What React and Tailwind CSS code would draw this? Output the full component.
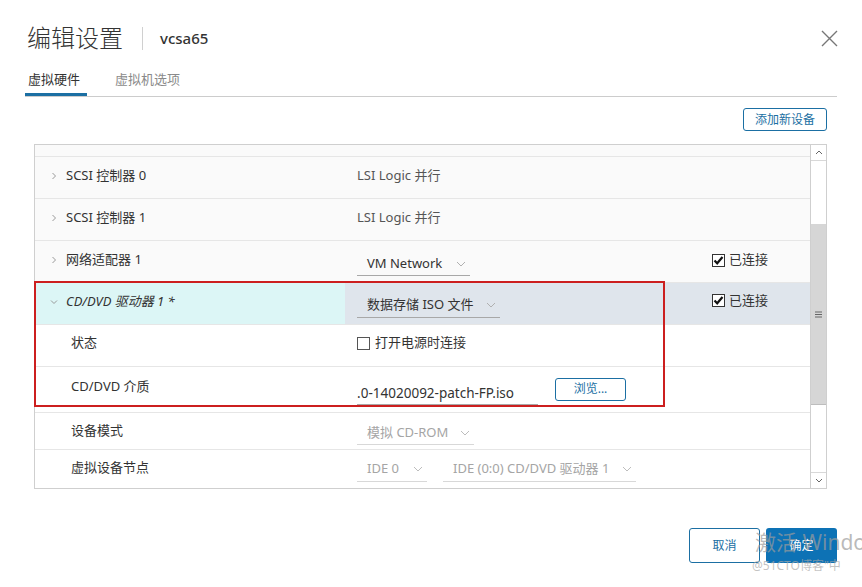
import React from 'react';

const FONT = { fontFamily: '"Noto Sans", "Noto Sans CJK SC", sans-serif' };

const Chevron = ({ open }) => (
  <svg width="8" height="8" viewBox="0 0 8 8" className="shrink-0">
    {open ? (
      <path d="M1 2.5 L4 5.5 L7 2.5" fill="none" stroke="#9a9a9a" strokeWidth="1" />
    ) : (
      <path d="M2.5 1 L5.5 4 L2.5 7" fill="none" stroke="#9a9a9a" strokeWidth="1" />
    )}
  </svg>
);

const Caret = ({ color = '#b0b0b0' }) => (
  <svg width="10" height="6" viewBox="0 0 10 6" className="shrink-0">
    <path d="M1 1 L5 5 L9 1" fill="none" stroke={color} strokeWidth="1" />
  </svg>
);

const CheckBox = ({ checked }) => (
  <svg width="13" height="13" viewBox="0 0 13 13" className="shrink-0">
    <rect x="0.5" y="0.5" width="12" height="12" fill="#fff" stroke={checked ? '#333' : '#555'} strokeWidth="1" />
    {checked && <path d="M2.5 6.5 L5.2 9.3 L10.5 3" fill="none" stroke="#111" strokeWidth="2.2" />}
  </svg>
);

const Select = ({ label, width, muted, className = '' }) => (
  <div
    className={`flex items-center justify-between border-b h-[24px] pl-[10px] pr-[4px] ${muted ? 'border-[#d8d8d8]' : 'border-[#a8a8a8]'} ${className}`}
    style={{ width }}
  >
    <span className={`text-[13px] ${muted ? 'text-[#a5a5a5]' : 'text-[#333]'}`}>{label}</span>
    <Caret color={muted ? '#bdbdbd' : '#b0b0b0'} />
  </div>
);

const DeviceRow = ({ label, children, right }) => (
  <div className="flex items-center h-[42px] pb-[3px] bg-[#fafafa] border-b border-[#e6e6e6]">
    <div className="w-[322px] flex items-center pl-[15px] gap-[8px]">
      <Chevron />
      <span className="text-[13px] text-[#333]">{label}</span>
    </div>
    <div className="w-[355px] flex items-center">{children}</div>
    <div className="flex items-center gap-[4px]">{right}</div>
  </div>
);

const SubRow = ({ label, height, children, last, pad = 0 }) => (
  <div
    className={`flex items-center bg-white ${last ? '' : 'border-b border-[#e6e6e6]'}`}
    style={{ height, paddingBottom: pad }}
  >
    <div className="w-[322px] pl-[36px] text-[13px] text-[#333]">{label}</div>
    <div className="flex items-center flex-1">{children}</div>
  </div>
);

const Connected = () => (
  <>
    <CheckBox checked />
    <span className="text-[13px] text-[#333]">已连接</span>
  </>
);

export default function App() {
  return (
    <div className="w-[862px] h-[587px] bg-white relative overflow-hidden" style={FONT}>
      {/* Header */}
      <div className="flex items-center justify-between pl-[27px] pr-[24px] pt-[20px] h-[56px]">
        <div className="flex items-center">
          <span className="text-[24px] font-light text-[#333] leading-none">编辑设置</span>
          <div className="w-px h-[23px] bg-[#d0d0d0] ml-[19px] mr-[17px]" />
          <span className="text-[15px] font-medium text-[#333]">vcsa65</span>
        </div>
        <svg width="17" height="17" viewBox="0 0 17 17">
          <path d="M1 1 L16 16 M16 1 L1 16" stroke="#777" strokeWidth="1.4" />
        </svg>
      </div>

      {/* Tabs */}
      <div className="mx-[25px] mt-[10px] flex border-b border-[#cccccc] h-[31px]">
        <div className="px-[3px] w-[62px] border-b-[3px] border-[#1b6fa3] text-[13px] text-[#333] pt-[4px]">
          虚拟硬件
        </div>
        <div className="ml-[28px] text-[13px] text-[#8a8a8a] pt-[4px]">虚拟机选项</div>
      </div>

      {/* Add device */}
      <div className="flex justify-end pr-[35px] mt-[11px]">
        <button className="w-[84px] h-[23px] border border-[#1b6fa3] rounded-[3px] text-[12px] text-[#1b6fa3] bg-white">
          添加新设备
        </button>
      </div>

      {/* Device table */}
      <div className="ml-[34px] mt-[13px] w-[793px] h-[345px] border border-[#cfcfcf] flex">
        <div className="flex-1 flex flex-col">
          <div className="h-[12px] bg-[#fafafa] border-b border-[#e6e6e6]" />
          <DeviceRow label="SCSI 控制器 0">
            <span className="text-[13px] text-[#555]">LSI Logic 并行</span>
          </DeviceRow>
          <DeviceRow label="SCSI 控制器 1">
            <span className="text-[13px] text-[#555]">LSI Logic 并行</span>
          </DeviceRow>
          <DeviceRow label="网络适配器 1" right={<Connected />}>
            <Select label="VM Network" width={113} className="mt-[8px]" />
          </DeviceRow>

          {/* Expanded CD/DVD */}
          <div className="flex h-[42px] border-b border-[#e6e6e6]">
            <div className="w-[310px] bg-[#dcf6f6] flex items-center pl-[15px] gap-[8px] pb-[4px]">
              <Chevron open />
              <span className="text-[13px] italic text-[#333]">CD/DVD 驱动器 1 *</span>
            </div>
            <div className="flex-1 bg-[#dfe5ec] flex items-center">
              <div className="w-[12px]" />
              <div className="w-[355px] flex items-center">
                <Select label="数据存储 ISO 文件" width={143} className="mt-[4px]" />
              </div>
              <div className="flex items-center gap-[4px] mb-[6px]">
                <Connected />
              </div>
            </div>
          </div>
          <SubRow label="状态" height={42} pad={5}>
            <div className="flex items-center gap-[5px]">
              <CheckBox />
              <span className="text-[13px] text-[#333]">打开电源时连接</span>
            </div>
          </SubRow>
          <SubRow label="CD/DVD 介质" height={46} pad={5}>
            <div className="w-[181px] h-[24px] border-b border-[#a8a8a8] overflow-hidden flex items-end justify-end mt-[12px] pr-[24px]">
              <span className="text-[13.5px] text-[#333] whitespace-nowrap pb-[1px]">
                VMware-VCSA-all-6.5.0-14020092-patch-FP.iso
              </span>
            </div>
            <button className="ml-[17px] w-[71px] h-[23px] border border-[#1b6fa3] rounded-[3px] text-[12px] text-[#1b6fa3] bg-white mt-[4px]">
              浏览...
            </button>
          </SubRow>
          <SubRow label="设备模式" height={37}>
            <Select label="模拟 CD-ROM" width={117} muted className="mt-[4px]" />
          </SubRow>
          <SubRow label="虚拟设备节点" height={37} last pad={2}>
            <Select label="IDE 0" width={70} muted className="mt-[4px]" />
            <Select label="IDE (0:0) CD/DVD 驱动器 1" width={193} muted className="ml-[16px] mt-[4px]" />
          </SubRow>
        </div>

        {/* Scrollbar */}
        <div className="w-[16px] border-l border-[#cfcfcf] flex flex-col bg-white">
          <div className="h-[16px] border-b border-[#d8d8d8] flex items-center justify-center">
            <svg width="8" height="5" viewBox="0 0 8 5">
              <path d="M1 4 L4 1 L7 4" fill="none" stroke="#666" strokeWidth="1" />
            </svg>
          </div>
          <div className="h-[63px]" />
          <div className="h-[181px] bg-[#d6d6d6] border-b border-[#bdbdbd] flex items-center justify-center">
            <svg width="7" height="7" viewBox="0 0 7 7">
              <path d="M0 1 H7 M0 3.5 H7 M0 6 H7" stroke="#666" strokeWidth="1" />
            </svg>
          </div>
          <div className="flex-1" />
          <div className="h-[16px] border-t border-[#d8d8d8] flex items-center justify-center">
            <svg width="8" height="5" viewBox="0 0 8 5">
              <path d="M1 1 L4 4 L7 1" fill="none" stroke="#666" strokeWidth="1" />
            </svg>
          </div>
        </div>
      </div>

      {/* Footer */}
      <div className="flex justify-end gap-[6px] pr-[25px] mt-[39px]">
        <button className="w-[71px] h-[35px] border border-[#1b6fa3] rounded-[3px] text-[12px] text-[#1b6fa3] bg-white">
          取消
        </button>
        <button className="w-[71px] h-[35px] rounded-[3px] text-[12px] text-white bg-[#0d72b5]">
          确定
        </button>
      </div>

      {/* Red annotation box */}
      <div className="absolute left-[34px] top-[281px] w-[631px] h-[126px] border-2 border-[#cc1f1f] pointer-events-none" />

      {/* Windows activation watermark */}
      <div className="absolute left-[755px] top-[527px] text-[21px] text-[#9c9c9c]/70 whitespace-nowrap pointer-events-none">
        激活 Windo
      </div>
      <div className="absolute left-[752px] top-[557px] text-[12px] text-[#a8a8a8]/70 whitespace-nowrap pointer-events-none">
        @51CTO博客"中
      </div>
    </div>
  );
}
